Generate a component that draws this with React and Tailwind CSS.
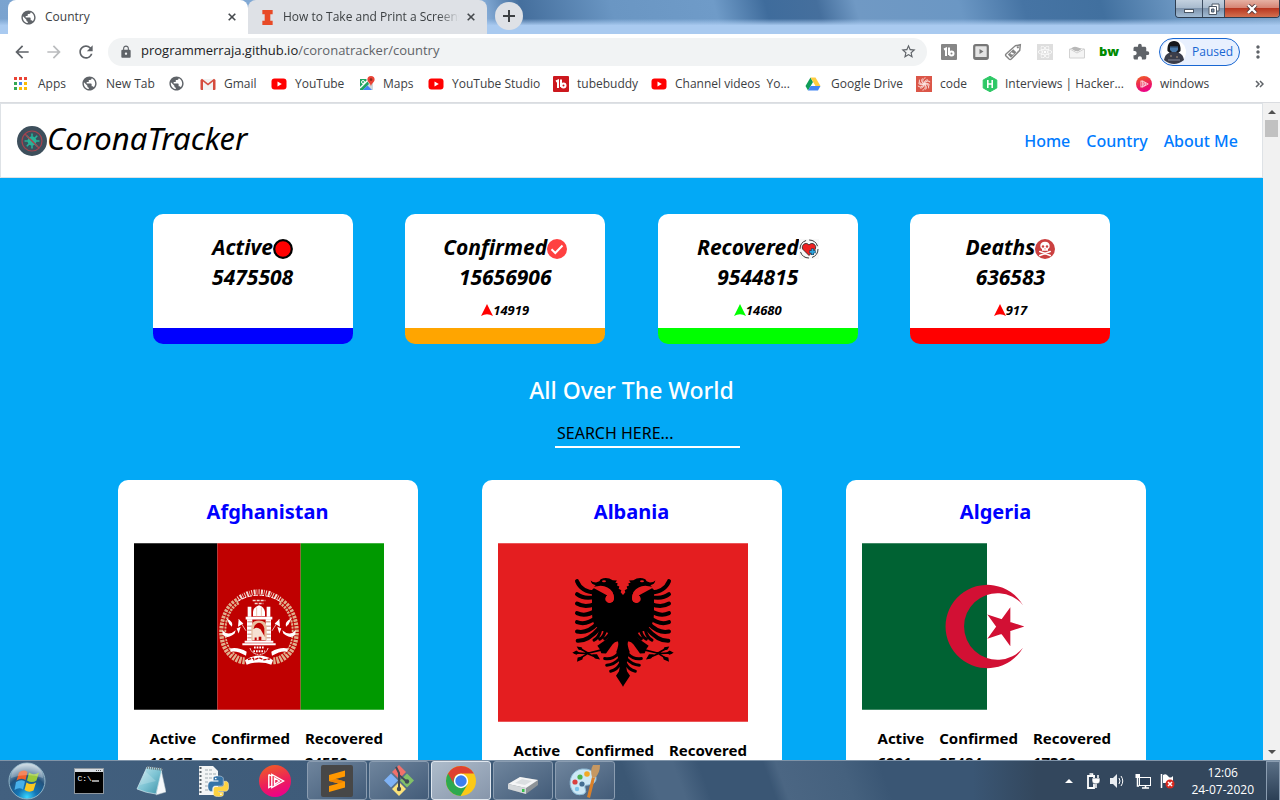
import React from "react";
import { MdArrowBack, MdArrowForward, MdRefresh, MdLock, MdStarBorder, MdExtension, MdMoreVert, MdPublic } from "react-icons/md";
import { FaReact } from "react-icons/fa";

/* ---------- browser icons ---------- */

const Globe = () => <MdPublic className="size-[17px] shrink-0 text-[#5f6368]" />;

const AppsIcon = () => (
  <svg viewBox="0 0 14 14" className="size-3.5 shrink-0">
    {["#ea4335", "#ea4335", "#ea4335", "#34a853", "#4285f4", "#fbbc05", "#34a853", "#fbbc05", "#fbbc05"].map((c, i) => (
      <rect key={i} x={(i % 3) * 5} y={Math.floor(i / 3) * 5} width="3" height="3" fill={c} />
    ))}
  </svg>
);

const GmailIcon = () => (
  <svg viewBox="0 0 16 16" className="size-4 shrink-0">
    <rect x="1" y="3" width="14" height="11" rx="1" fill="#f2f2f2" />
    <path d="M3 14V5.500L8 9.500L13 5.500V14H14.500Q15.500 14 15.500 13V4L14 2.800L8 7.400L2 2.800L.5 4V13Q.5 14 1.500 14Z" fill="#d54b3d" />
  </svg>
);

const YouTubeIcon = () => (
  <svg viewBox="0 0 16 16" className="size-4 shrink-0">
    <rect x="0.500" y="2.500" width="15" height="11" rx="3" fill="#f00" />
    <path d="M6.500 5.500V10.500L10.800 8Z" fill="#fff" />
  </svg>
);

const MapsIcon = () => (
  <svg viewBox="0 0 16 16" className="size-4 shrink-0">
    <path d="M1 3H14V14H1Z" fill="#cfd8dc" />
    <path d="M1 3H7L10 8L4 14H1Z" fill="#1fa463" />
    <path d="M4 14L8.500 9.500L13 14Z" fill="#4285f4" />
    <path d="M1 12L10 3" stroke="#fff" strokeWidth="1.400" />
    <circle cx="4" cy="6" r="1.500" fill="none" stroke="#fff" />
    <path d="M12 0A3.600 3.600 0 0 0 8.400 3.600C8.400 6.500 11.500 7 12 10.500C12.500 7 15.600 6.500 15.600 3.600A3.600 3.600 0 0 0 12 0Z" fill="#ea4335" />
    <circle cx="12" cy="3.600" r="1.300" fill="#8e2a20" />
  </svg>
);

const TubeBuddyIcon = ({ color = "#cc181e" }) => (
  <svg viewBox="0 0 16 16" className="size-4 shrink-0">
    <rect width="16" height="16" rx="1" fill={color} />
    <path d="M3 5.500L5 4.500V12M8 3.500V11" stroke="#fff" strokeWidth="2" fill="none" />
    <circle cx="10.500" cy="9.500" r="2" stroke="#fff" strokeWidth="2" fill="none" />
  </svg>
);

const DriveIcon = () => (
  <svg viewBox="0 0 16 16" className="size-4 shrink-0">
    <path d="M5.500 1.500L0.500 10L3 14.500L8 6Z" fill="#0f9d58" />
    <path d="M5.500 1.500H10.500L15.500 10H10.500Z" fill="#ffcd40" />
    <path d="M5.600 10H15.500L13 14.500H3Z" fill="#4285f4" />
  </svg>
);

const CodeIcon = () => (
  <svg viewBox="0 0 16 16" className="size-4 shrink-0">
    <rect width="16" height="16" fill="#db5648" />
    {[0, 60, 120, 180, 240, 300].map((a) => (
      <path key={a} d="M8 8C6 6 6.500 2.500 9.500 1.800M8 8C8 5 10 3.500 12 4" transform={`rotate(${a} 8 8)`} stroke="#fbe4e1" strokeWidth="0.900" fill="none" />
    ))}
  </svg>
);

const HackerIcon = () => (
  <svg viewBox="0 0 16 16" className="size-4 shrink-0">
    <path d="M8 0.300L14.800 4V12L8 15.700L1.200 12V4Z" fill="#2ec866" stroke="#2ec866" strokeLinejoin="round" />
    <path d="M5.800 4V12M10.200 4V12M5.800 8H10.200" stroke="#fff" strokeWidth="1.600" />
  </svg>
);

const Pluralsight = ({ className }) => (
  <svg viewBox="0 0 32 32" className={className}>
    <defs>
      <linearGradient id="ps" x1="0.300" y1="0" x2="0.600" y2="1">
        <stop offset="0" stopColor="#f05a28" />
        <stop offset="0.600" stopColor="#ec1c5d" />
        <stop offset="1" stopColor="#ec008c" />
      </linearGradient>
    </defs>
    <circle cx="16" cy="16" r="16" fill="url(#ps)" />
    <path d="M9.800 9.500V22.500L12.500 21M9.800 9.500L12.500 11M12.800 9.500V22.500L24.500 16ZM15.500 13V19.500L20.500 16Z" fill="none" stroke="#fff" strokeWidth="1.400" />
  </svg>
);

const bookmarks = [
  { label: "Apps", icon: <AppsIcon />, w: "w-[67px]", gap: "gap-2.5" },
  { label: "New Tab", icon: <Globe />, w: "w-[87px]" },
  { label: "", icon: <Globe />, w: "w-8" },
  { label: "Gmail", icon: <GmailIcon />, w: "w-[71px]" },
  { label: "YouTube", icon: <YouTubeIcon />, w: "w-[88px]" },
  { label: "Maps", icon: <MapsIcon />, w: "w-[69px]" },
  { label: "YouTube Studio", icon: <YouTubeIcon />, w: "w-[125px]" },
  { label: "tubebuddy", icon: <TubeBuddyIcon />, w: "w-[98px]" },
  { label: "Channel videos  Yo...", icon: <YouTubeIcon />, w: "w-[154px]" },
  { label: "Google Drive", icon: <DriveIcon />, w: "w-[111px]", gap: "gap-2.5" },
  { label: "code", icon: <CodeIcon />, w: "w-[66px]" },
  { label: "Interviews | Hacker...", icon: <HackerIcon />, w: "w-[154px]", gap: "gap-[7px]" },
  { label: "windows", icon: <Pluralsight className="size-4 shrink-0" />, w: "w-[87px]" },
];

const extensions = [
  { name: "TubeBuddy", icon: <TubeBuddyIcon color="#868686" /> },
  {
    name: "Video player",
    icon: (
      <svg viewBox="0 0 16 16" className="size-4">
        <rect x="1.200" y="1.200" width="13.600" height="13.600" rx="1.500" fill="#e4e4e4" stroke="#777" strokeWidth="2.200" />
        <path d="M2 14H14" stroke="#777" strokeWidth="2" />
        <path d="M6.500 5V10L10.500 7.500Z" fill="#777" />
      </svg>
    ),
  },
  {
    name: "Price tag",
    icon: (
      <svg viewBox="0 0 16 16" className="size-[18px]">
        <path d="M10 2.500L14.500 1.500L14 6.500L6.500 14.200Q5.500 15 4.500 14.200L1.800 11.500Q1 10.500 1.800 9.800Z" fill="#fff" stroke="#858585" strokeWidth="1.300" />
        <path d="M8.200 5.500L11 8.200L6.200 13L3.400 10.200Z" fill="#858585" />
        <path d="M6 9L8.500 9.800" stroke="#fff" strokeWidth="1.500" />
        <circle cx="12.300" cy="3.800" r="1" fill="#858585" />
      </svg>
    ),
  },
  {
    name: "React tools",
    icon: (
      <span className="flex size-4 items-center justify-center bg-[#dedede]">
        <FaReact className="size-3.5 text-white" />
      </span>
    ),
  },
  {
    name: "Mail",
    icon: (
      <svg viewBox="0 0 16 16" className="size-4">
        <path d="M0.500 5H15.500V14H0.500Z" fill="#f4f4f4" stroke="#d2d2d2" />
        <path d="M1 5L8 9L15 5" fill="#fff" stroke="#d0d0d0" />
        <path d="M2 4.500Q5 1.500 9 3.500T14 4L9 7.500Q5 7 2 4.500Z" fill="#b8b8b8" />
      </svg>
    ),
  },
  { name: "bw", icon: <span className="font-['Open_Sans'] text-[13px] font-extrabold text-[#008a00]">bw</span> },
  { name: "Extensions", icon: <MdExtension className="size-[18px] text-[#5f6368]" /> },
];

function Tab({ title, icon, active }) {
  return (
    <div className={"flex h-[34px] items-center rounded-t-lg pr-2 pl-3 " + (active ? "w-60 bg-white" : "w-[239px] bg-[#dee1e6]")}>
      {icon}
      <span className={"ml-2 min-w-0 flex-1 overflow-hidden whitespace-nowrap " + (active ? "" : "[mask-image:linear-gradient(to_right,black_88%,transparent)]")}>
        {title}
      </span>
      <button aria-label="Close tab" className="ml-1 flex size-4 items-center justify-center text-[#45494d]">
        <svg viewBox="0 0 8 8" className="size-2">
          <path d="M0.700 0.700L7.300 7.300M7.300 0.700L0.700 7.300" stroke="currentColor" strokeWidth="1.600" />
        </svg>
      </button>
    </div>
  );
}

function WindowButtons() {
  return (
    <div className="flex h-[18px] overflow-hidden rounded-b border border-t-0 border-[#2d3d50]">
      <button aria-label="Minimize" className="flex w-[27px] items-end justify-center border-r border-[#3c4c60] bg-[linear-gradient(#c3d1df_0%,#a9bbce_45%,#7d93ac_50%,#a3bcd4_100%)] pb-1">
        <span className="h-1 w-2.5 border border-[#4c5866] bg-white" />
      </button>
      <button aria-label="Restore" className="flex w-[22px] items-center justify-center border-r border-[#3c4c60] bg-[linear-gradient(#c3d1df_0%,#a9bbce_45%,#7d93ac_50%,#a3bcd4_100%)]">
        <svg viewBox="0 0 12 12" className="size-3">
          <path d="M4 1H11V8H4Z" fill="#fff" stroke="#4c5866" />
          <path d="M1 3.500H8.500V11.500H1Z" fill="#fff" stroke="#4c5866" />
          <path d="M3.500 6H6V9H3.500Z" fill="#7e93aa" stroke="#4c5866" />
        </svg>
      </button>
      <button aria-label="Close" className="flex w-[54px] items-center justify-center bg-[linear-gradient(#e6b1a3_0%,#d68574_45%,#b93720_50%,#d3704f_100%)]">
        <svg viewBox="0 0 12 10" className="h-2.5 w-3">
          <path d="M2 1L10 9M10 1L2 9" stroke="#54383a" strokeWidth="4" />
          <path d="M2 1L10 9M10 1L2 9" stroke="#fff" strokeWidth="2.400" />
        </svg>
      </button>
    </div>
  );
}

function Browser() {
  return (
    <header className="shrink-0 font-['Open_Sans','Noto_Sans',sans-serif] text-[12px] text-[#3c4043]">
      <div className="flex h-[34px] items-start bg-[linear-gradient(to_bottom,transparent_55%,#a9caf0_75%),linear-gradient(75deg,#7aa3cf_0%,#86add8_38%,#456f9d_41%,#6a96c3_48%,#6f9bc8_56%,#3f6c9c_60%,#456f9d_64%,#7099c4_67%,#6b97c4_75%,#4674a4_80%,#41709f_86%,#6c97c2_92%,#7fa5cc_100%)] pl-2">
        <Tab active title="Country" icon={<Globe />} />
        <Tab
          title="How to Take and Print a Screenshot"
          icon={
            <svg viewBox="0 0 16 16" className="size-[15px] shrink-0">
              <path d="M2.500 0H13.500V4.500H11V11.500H13.500V16H2.500V11.500H5V4.500H2.500Z" fill="#e84a27" />
            </svg>
          }
        />
        <button aria-label="New tab" className="mt-0.5 ml-2 flex size-7 items-center justify-center rounded-full bg-[#dee1e6] text-[#3c4043]">
          <svg viewBox="0 0 12 12" className="size-3"><path d="M6 0V12M0 6H12" stroke="currentColor" strokeWidth="2" /></svg>
        </button>
        <div className="flex-1" />
        <WindowButtons />
      </div>

      <div className="flex h-[35px] items-center bg-white px-1.5">
        <button aria-label="Back" className="flex w-8 justify-center text-[#5f6368]"><MdArrowBack className="size-5" /></button>
        <button aria-label="Forward" className="flex w-8 justify-center text-[#babcbe]"><MdArrowForward className="size-5" /></button>
        <button aria-label="Reload" className="flex w-8 justify-center text-[#5f6368]"><MdRefresh className="size-5" /></button>
        <div className="ml-1.5 flex h-7 flex-1 items-center rounded-full bg-[#f1f3f4] pr-2.5 pl-[11px]">
          <MdLock className="size-3.5 text-[#5f6368]" />
          <a href="#country" className="ml-2 flex-1 pb-px text-[13px] text-[#5f6368]">
            <span className="text-[#202124]">programmerraja.github.io</span>/coronatracker/country
          </a>
          <button aria-label="Bookmark this page" className="text-[#5f6368]"><MdStarBorder className="size-[17px]" /></button>
        </div>
        <div className="ml-1.5 flex">
          {extensions.map((e) => (
            <button key={e.name} aria-label={e.name} className="flex h-7 w-8 items-center justify-center">{e.icon}</button>
          ))}
        </div>
        <button className="ml-0.5 flex h-7 w-[81px] items-center gap-1.5 rounded-full border border-[#1967d2] bg-[#e8f0fe] pl-0.5 text-[#1967d2]">
          <svg viewBox="0 0 24 24" className="size-6">
            <circle cx="12" cy="12" r="12" fill="#fff" />
            <path d="M5.500 11C5 5 7 1 12 1S19 5 18.500 11L15 14H9Z" fill="#15171d" />
            <path d="M8 6H16V10L14 12H10L8 10Z" fill="#4777a8" />
            <path d="M8 6H16V7.500H8Z" fill="#27415f" />
            <path d="M2 20C3 13 8 12 12 12S21 13 22 20Q17 24 12 24T2 20Z" fill="#3a3d4a" />
            <circle cx="9" cy="16" r="1" fill="#8a7a6c" />
            <circle cx="15" cy="17" r="1" fill="#8a7a6c" />
            <path d="M6 20H18" stroke="#6c7080" strokeWidth="1.500" />
          </svg>
          Paused
        </button>
        <button aria-label="Menu" className="ml-0.5 flex w-8 justify-center text-[#5f6368]"><MdMoreVert className="size-5" /></button>
      </div>

      <nav aria-label="Bookmarks" className="flex h-[34px] items-center border-b border-[#dadce0] bg-white pr-4 pb-1 pl-3.5">
        {bookmarks.map((b, i) => (
          <a key={i} href="#bookmark" aria-label={b.label || "Bookmark"} className={"flex shrink-0 items-center whitespace-pre " + b.w + " " + (b.gap || "gap-2")}>
            {b.icon}
            {b.label && <span>{b.label}</span>}
          </a>
        ))}
        <button aria-label="More bookmarks" className="ml-auto text-[#5f6368]">
          <svg viewBox="0 0 9 8" className="h-2 w-[9px]">
            <path d="M1 1L4 4L1 7M5 1L8 4L5 7" fill="none" stroke="currentColor" strokeWidth="1.500" />
          </svg>
        </button>
      </nav>
    </header>
  );
}

/* ---------- page ---------- */

const VirusLogo = () => (
  <svg viewBox="0 0 30 30" className="size-[30px]">
    <circle cx="15" cy="15" r="15" fill="#3d4f5c" />
    <circle cx="15" cy="15" r="4.500" fill="#27b399" />
    {[0, 45, 90, 135, 180, 225, 270, 315].map((a) => (
      <path key={a} d="M15 11V8.500M14.200 8.300H15.800" transform={`rotate(${a} 15 15)`} stroke="#27b399" strokeWidth="1.500" />
    ))}
    <circle cx="15" cy="15" r="10" fill="none" stroke="#a6434f" strokeWidth="1.200" />
    <path d="M8 8L22 22" stroke="#a6434f" strokeWidth="1.400" />
  </svg>
);

const ActiveIcon = () => (
  <svg viewBox="0 0 20 20" className="size-5">
    <circle cx="10" cy="10" r="8.800" fill="#f00" stroke="#000" strokeWidth="2.200" />
  </svg>
);

const CheckIcon = () => (
  <svg viewBox="0 0 20 20" className="size-5">
    <circle cx="10" cy="10" r="10" fill="#ff4141" />
    <path d="M4.500 10.300L8.300 14L15.500 6.500" fill="none" stroke="#fff" strokeWidth="2" />
  </svg>
);

const HeartIcon = () => (
  <svg viewBox="0 0 20 20" className="size-5">
    <rect width="20" height="20" fill="#f8f8f8" />
    <circle cx="10" cy="10" r="9" fill="none" stroke="#222" strokeWidth="0.900" strokeDasharray="11 3.100" />
    <path d="M10 16.500L4 10.500C1.500 6.500 6.500 2 10 6C13.500 2 18.500 6.500 16 10.500Z" fill="#ee2222" stroke="#222" strokeWidth="0.800" />
    <path d="M13.500 9.500V16M10.300 12.800H16.700" stroke="#163c57" strokeWidth="3" />
    <path d="M13.500 10V15.500M10.800 12.800H16.200" stroke="#2da3dc" strokeWidth="1.800" />
  </svg>
);

const SkullIcon = () => (
  <svg viewBox="0 0 20 20" className="size-5">
    <circle cx="10" cy="10" r="10" fill="#cb4040" />
    <path d="M10 2.800C6.800 2.800 5.300 4.800 5.300 7C5.300 8.600 6 9.500 7 10V11.800H13V10C14 9.500 14.700 8.600 14.700 7C14.700 4.800 13.200 2.800 10 2.800Z" fill="#fff" />
    <circle cx="8" cy="7.500" r="1.200" fill="#cb4040" />
    <circle cx="12" cy="7.500" r="1.200" fill="#cb4040" />
    <path d="M10 9L9.300 10.200H10.700Z" fill="#cb4040" />
    <path d="M4.800 12.500L15.200 16.500M15.200 12.500L4.800 16.500" stroke="#fff" strokeWidth="1.600" strokeLinecap="round" />
  </svg>
);

const stats = [
  { title: "Active", total: "5475508", bar: "border-[#0000ff]", icon: <ActiveIcon /> },
  { title: "Confirmed", total: "15656906", delta: "14919", arrow: "#ff0000", bar: "border-[#ffa500]", icon: <CheckIcon /> },
  { title: "Recovered", total: "9544815", delta: "14680", arrow: "#00ff00", bar: "border-[#00ff00]", icon: <HeartIcon /> },
  { title: "Deaths", total: "636583", delta: "917", arrow: "#ff0000", bar: "border-[#ff0000]", icon: <SkullIcon /> },
];

function StatCard({ title, total, delta, arrow, bar, icon }) {
  return (
    <section className={"h-[130px] w-[200px] rounded-[10px] border-b-16 bg-white pt-[18px] text-center font-bold text-black italic " + bar}>
      <h3 className="flex items-center justify-center text-[21px] leading-[30px]">
        {title}
        <span className="pt-1">{icon}</span>
      </h3>
      <p className="text-[21px] leading-[30px]">{total}</p>
      {delta && (
        <p className="mt-2 flex items-center justify-center text-[13px] leading-5">
          <svg viewBox="0 0 12 12" className="size-3">
            <path d="M6 0L12 12Q6 8.500 0 12Z" fill={arrow} />
          </svg>
          {delta}
        </p>
      )}
    </section>
  );
}

const AfghanistanFlag = () => (
  <svg viewBox="72 219 750 500" className="h-[167px] w-[250px]" role="img" aria-label="Flag of Afghanistan">
    <path d="M72 219H322V719H72Z" fill="#000" />
    <path d="M322 219H572V719H322Z" fill="#bf0000" />
    <path d="M572 219H822V719H572Z" fill="#090" />
    <path d="M384 386Q447 343 512 388" fill="none" stroke="#f3dcd2" strokeWidth="15" strokeDasharray="3 4 6 3 2 4" />
    <path d="M380 395Q447 354 516 397" fill="none" stroke="#fff" strokeWidth="3" strokeDasharray="14 4" />
    <path d="M428 391H466M434 400H460" stroke="#f3d9cf" strokeWidth="4" strokeDasharray="9 3" />
    {["", "translate(894 0) scale(-1 1)"].map((t) => (
      <g key={t} transform={t}>
        <path d="M383 393C332 420 322 520 366 555C378 566 392 572 404 572" fill="none" stroke="#e0b08d" strokeWidth="21" strokeDasharray="7 3" />
        <path d="M380 396C336 422 327 518 368 552" fill="none" stroke="#bf0000" strokeWidth="3" />
        <path d="M337 480Q355 500 377 480L374 490Q352 508 338 494ZM350 445Q372 455 366 470L358 462ZM360 535Q385 530 410 545L408 557Q380 540 362 545Z" fill="#fff" />
        <path d="M386 447L408 482" fill="none" stroke="#fff" strokeWidth="2" />
        <path d="M386 447L400 460L384 470ZM380 475L392 470L386 490Z" fill="#fff" />
        <path d="M413 410H424V440H413ZM411 447H427V512H411Z" fill="#fff" />
        <path d="M412 455H426M412 468H426M412 480H426M412 492H426M412 503H426" stroke="#c0836e" strokeWidth="3" />
        <path d="M407 440H447V448H407ZM404 512H447V518H404ZM397 519H447V525H397Z" fill="#fff" />
        <path d="M405 570Q425 556 447 556V577Q425 577 410 584Z" fill="#fff" />
        <path d="M420 534Q426 552 447 553" fill="none" stroke="#fff" strokeWidth="3" strokeDasharray="5 2" />
      </g>
    ))}
    <path d="M429 438V425Q431 410 447 405Q463 410 465 425V438Z" fill="#fff" />
    <path d="M440 412V438M454 412V438" stroke="#efc7b0" strokeWidth="3" />
    <path d="M424 510V470Q426 451 447 451Q468 451 470 470V510H463V475Q460 460 447 458Q434 460 431 475V510Z" fill="#e8bfa0" />
    <path d="M428 478Q440 468 452 478L466 503V510H428Z" fill="#f6e1d2" />
    <path d="M434 510V502H440V510M446 510V500H454V510" fill="#bf0000" />
    <path d="M432 532H462M430 543H464" stroke="#fff" strokeWidth="6" strokeDasharray="5 3" />
    <path d="M414 568L430 564L432 569L447 563L462 569L480 566" fill="none" stroke="#bf0000" strokeWidth="4" strokeDasharray="10 3" />
  </svg>
);

const AlbaniaFlag = () => (
  <svg viewBox="54 219 750 536" className="h-[179px] w-[250px]" role="img" aria-label="Flag of Albania">
    <path d="M54 219H804V755H54Z" fill="#e41e20" />
    {["", "translate(858 0) scale(-1 1)"].map((t) => (
      <g key={t} transform={t} fill="#000">
        <path d="M429.500 375L422 366L424 360L416 356L418 349L411 346L413 339L406 338L411 331L398 330Q385 321 370 324Q360 326 358 333L348 337Q337 337 332 331Q334 343 347 345L342 350L362 347Q385 348 397 365Q406 385 398 395Q385 403 377 391Q375 380 382 376L342 354Q333 358 336 370V425Q336 450 344 466L363 481L390 490L384 504L352 527Q358 533 364 549L378 550L398 522Q406 512 414 514Q417 525 409 545L420 585L417 603L408 617L429.500 650Z" />
        <path fill="#e41e20" d="M348 350Q385 352 398 368Q406 385 398 395Q385 403 377 391Q375 380 382 376Q368 362 348 350Z" />
        <g fill="none" stroke="#000" strokeLinecap="round">
          <path strokeWidth="12" d="M291 333Q304 365 346 367M291 372Q311 388 346 380M291 400Q314 414 346 401M291 429Q318 441 346 421M291 456Q320 466 348 442M291 484Q322 491 352 460M293 512Q325 513 359 473" />
          <path strokeWidth="9" d="M342 510Q357 503 363 476M359 507Q371 501 376 482M374 506Q387 499 391 484" />
          <path strokeWidth="9" d="M374 565Q397 569 413 552M380 585Q402 584 419 565M392 603Q412 599 422 578" />
          <path strokeWidth="5" d="M362 540L320 550L284 548M325 549L296 533M325 549L296 567M322 550L355 564" />
        </g>
        <path d="M277 548L289 541L299 548L289 554ZM290 529L305 531L309 541L296 539ZM291 575L293 562L310 558L307 568ZM336 552L351 552L360 568L345 565Z" />
        <ellipse cx="372" cy="333" rx="6" ry="3" fill="#e41e20" />
      </g>
    ))}
  </svg>
);

const AlgeriaFlag = () => (
  <svg viewBox="66 219 750 500" className="h-[167px] w-[250px]" role="img" aria-label="Flag of Algeria">
    <path d="M66 219H816V719H66Z" fill="#fff" />
    <path d="M66 219H441V719H66Z" fill="#006233" />
    <path d="M549 405A125 125 0 1 0 549 533A100 100 0 1 1 549 405Z" fill="#d21034" />
    <path d="M553 469L442 433L511 528V411L442 506Z" fill="#d21034" />
  </svg>
);

const countries = [
  { name: "Afghanistan", flag: <AfghanistanFlag />, values: ["10167", "35928", "24550"] },
  { name: "Albania", flag: <AlbaniaFlag />, values: ["1875", "4466", "2463"] },
  { name: "Algeria", flag: <AlgeriaFlag />, values: ["6991", "25484", "17369"] },
];

function CountryCard({ name, flag, values }) {
  return (
    <article className="w-[300px] rounded-[10px] bg-white px-4 pt-[17px] pb-6">
      <h3 className="text-center text-[20px] leading-[30px] font-bold text-[#0000ff]">{name}</h3>
      <div className="mt-4">{flag}</div>
      <table className="mt-4 ml-4 text-left text-[15px] leading-6 font-bold text-black">
        <thead>
          <tr>
            {["Active", "Confirmed", "Recovered"].map((h) => (
              <th key={h} className="pr-[15px]">{h}</th>
            ))}
          </tr>
        </thead>
        <tbody>
          <tr>
            {values.map((v) => (
              <td key={v} className="pr-[15px]">{v}</td>
            ))}
          </tr>
        </tbody>
      </table>
    </article>
  );
}

function Page() {
  return (
    <main className="min-w-0 flex-1 overflow-hidden bg-[#03a9f6] font-['Noto_Sans','Open_Sans',sans-serif]">
      <div className="flex h-[75px] items-center justify-between border border-[#dee2e6] bg-white px-4">
        <a href="#home" className="flex items-center text-[31px] text-black italic">
          <VirusLogo />
          <span className="pb-1">CoronaTracker</span>
        </a>
        <nav aria-label="Main" className="flex gap-4 pr-2 text-[16px] font-medium text-[#007bff]">
          <a href="#home">Home</a>
          <a href="#country">Country</a>
          <a href="#about">About Me</a>
        </nav>
      </div>

      <div className="flex justify-evenly px-[100px] pt-9">
        {stats.map((s) => <StatCard key={s.title} {...s} />)}
      </div>

      <h2 className="mt-7 text-center text-[23px] leading-9 font-medium text-white">All Over The World</h2>
      <div className="mt-3 flex justify-center pl-8">
        <input aria-label="Search country" placeholder="SEARCH HERE..." className="h-[28px] w-[185px] border-b-2 border-white bg-transparent px-0.5 text-[16px] text-black outline-none placeholder:text-black" />
      </div>

      <div className="mt-8 flex items-start justify-center gap-16">
        {countries.map((c) => <CountryCard key={c.name} {...c} />)}
      </div>
    </main>
  );
}

function ScrollBar() {
  return (
    <div className="flex w-[17px] shrink-0 flex-col items-center bg-[#f1f1f1]">
      <button aria-label="Scroll up" className="flex h-[17px] items-center">
        <svg viewBox="0 0 8 4" className="h-1 w-2"><path d="M0 4L4 0L8 4Z" fill="#505050" /></svg>
      </button>
      <div className="h-[17px] w-[13px] bg-[#c1c1c1]" />
      <div className="flex-1" />
      <button aria-label="Scroll down" className="flex h-[17px] items-center">
        <svg viewBox="0 0 8 4" className="h-1 w-2"><path d="M0 0L4 4L8 0Z" fill="#505050" /></svg>
      </button>
    </div>
  );
}

/* ---------- taskbar ---------- */

const StartOrb = () => (
  <svg viewBox="0 0 38 38" className="size-[38px]">
    <defs>
      <radialGradient id="orb" cx="0.500" cy="0.950" r="0.900">
        <stop offset="0" stopColor="#39d7ff" />
        <stop offset="0.300" stopColor="#1374b4" />
        <stop offset="0.650" stopColor="#23527c" />
        <stop offset="1" stopColor="#b8cbd8" />
      </radialGradient>
    </defs>
    <circle cx="19" cy="19" r="18" fill="url(#orb)" stroke="#8fb3c6" />
    <path d="M11 10.500Q15.500 7 19.500 10L17.500 18Q13 15.500 8.500 18.500Z" fill="#f0602a" />
    <path d="M21 10.500Q26 14 31 10.500L28.500 18.500Q24 21.500 19 18.500Z" fill="#9bc93a" />
    <path d="M8 20Q13 17 17 19.500L15 27.500Q11 25 6.500 28Z" fill="#48b0ea" />
    <path d="M18.500 20.500Q23 23.500 28 20.500L25.500 28.500Q21 31 16.500 28Z" fill="#fcc822" />
    <path d="M3 16A16 15 0 0 1 35 16Q19 10 3 16Z" fill="#fff" opacity="0.250" />
  </svg>
);

const CmdIcon = () => (
  <svg viewBox="0 0 30 26" className="h-[26px] w-[30px]">
    <rect width="30" height="26" fill="#8e979f" />
    <rect x="1" y="1" width="28" height="3" fill="#d8dde2" />
    <path d="M22 2.500H28" stroke="#555" strokeDasharray="1 1" />
    <rect x="1" y="4" width="28" height="21" fill="#000" />
    <text x="3.500" y="13" fontSize="8" fill="#fff" fontFamily="Liberation Mono, monospace">C:\</text>
    <path d="M18 13H25" stroke="#fff" strokeWidth="1.200" />
  </svg>
);

const NotepadIcon = () => (
  <svg viewBox="0 0 30 32" className="h-8 w-[30px]">
    <defs>
      <linearGradient id="note" x1="0" y1="0" x2="1" y2="1">
        <stop offset="0" stopColor="#c6e7ee" />
        <stop offset="0.500" stopColor="#7ec4d4" />
        <stop offset="1" stopColor="#3b90a6" />
      </linearGradient>
    </defs>
    <path d="M25 4L30 27L20 30Z" fill="#f5f8fa" stroke="#a9b9c0" strokeWidth="0.500" />
    <path d="M11 2L26 4L20 29Q10 28 1 24Z" fill="url(#note)" stroke="#d3eaf0" strokeWidth="0.700" />
    <path d="M11 2.500L27 4.500" stroke="#6d7a80" strokeWidth="3" strokeDasharray="1 1" />
    <path d="M9 6L20 16L4 20Z" fill="#fff" opacity="0.200" />
  </svg>
);

const PYTHON_TOP = "M14.25.18l.9.2.73.26.59.3.45.32.34.34.25.34.16.33.1.3.04.26.02.2-.01.13V8.5l-.05.63-.13.55-.21.46-.26.38-.3.31-.33.25-.35.19-.35.14-.33.1-.3.07-.26.04-.21.02H8.77l-.69.05-.59.14-.5.22-.41.27-.33.32-.27.35-.2.36-.15.37-.1.35-.07.32-.04.27-.02.21v3.06H3.17l-.21-.03-.28-.07-.32-.12-.35-.18-.36-.26-.36-.36-.35-.46-.32-.59-.28-.73-.21-.88-.14-1.05-.05-1.23.06-1.22.16-1.04.24-.87.32-.71.36-.57.4-.44.42-.33.42-.24.4-.16.36-.1.32-.05.24-.01h.16l.06.01h8.16v-.83H6.18l-.01-2.75-.02-.37.05-.34.11-.31.17-.28.25-.26.31-.23.38-.2.44-.18.51-.15.58-.12.64-.1.71-.06.77-.04.84-.02 1.27.05z";
const PYTHON_BOTTOM = "M21.1 6.11l.28.06.32.12.35.18.36.27.36.35.35.47.32.59.28.73.21.88.14 1.04.05 1.23-.06 1.23-.16 1.04-.24.86-.32.71-.36.57-.4.45-.42.33-.42.24-.4.16-.36.09-.32.05-.24.02-.16-.01h-8.22v.82h5.84l.01 2.76.02.36-.05.34-.11.31-.17.29-.25.25-.31.24-.38.2-.44.17-.51.15-.58.13-.64.09-.71.07-.77.04-.84.01-1.27-.04-1.07-.14-.9-.2-.73-.25-.59-.3-.45-.33-.34-.34-.25-.34-.16-.33-.1-.3-.04-.25-.02-.2.01-.13v-5.34l.05-.64.13-.54.21-.46.26-.38.3-.32.33-.24.35-.2.35-.14.33-.1.3-.06.26-.04.21-.02.13-.01h5.84l.69-.05.59-.14.5-.21.41-.28.33-.32.27-.35.2-.36.15-.36.1-.35.07-.32.04-.28.02-.21V6.07h2.09l.14.01z";

const PythonIcon = () => (
  <svg viewBox="0 0 32 32" className="size-8">
    <path d="M2 1H16L21 6V30H2Z" fill="#f3f5f6" />
    <path d="M3.500 2V30" stroke="#59636a" strokeWidth="2" strokeDasharray="2 2" />
    <path d="M8 5H16M8 9H19M8 13H19M8 17H12M8 21H12M8 25H12" stroke="#bcc3c7" strokeWidth="1.500" strokeDasharray="3 1" />
    <g transform="translate(11 11) scale(0.860)">
      <path d={PYTHON_TOP} fill="#3674a8" stroke="#fff" strokeWidth="0.500" />
      <path d={PYTHON_BOTTOM} fill="#fdd341" stroke="#fff" strokeWidth="0.500" />
      <circle cx="9" cy="2.900" r="1" fill="#fff" />
      <circle cx="15" cy="21.100" r="1" fill="#fff" />
    </g>
  </svg>
);

const SublimeIcon = () => (
  <svg viewBox="0 0 32 32" className="size-8">
    <rect width="32" height="32" rx="2" fill="#474747" />
    <path d="M8 10L24 5.500V11.500L14.500 14L24 16.500V22.500L8 27V21L17.500 18.500L8 16Z" fill="#ff9800" />
    <path d="M8 16L14.500 14L24 16.500L17.500 18.500Z" fill="#f08400" />
  </svg>
);

const GitIcon = () => (
  <svg viewBox="0 0 34 34" className="size-[34px]">
    <path d="M17 1L24 8L17 15L10 8Z" fill="#f0716b" />
    <path d="M9 9.500L16 16.500L9 23.500L2 16.500Z" fill="#7fb2f5" />
    <path d="M25 9.500L32 16.500L25 23.500L18 16.500Z" fill="#82c168" />
    <path d="M17 18L24 25L17 32L10 25Z" fill="#fbe27a" />
    <path d="M14 3L17 9V25M17 11L24 17" stroke="#3e4a57" strokeWidth="2" fill="none" />
    <circle cx="17" cy="25" r="2.200" fill="#3e4a57" />
    <circle cx="25" cy="17.500" r="2.200" fill="#3e4a57" />
  </svg>
);

const ChromeIcon = () => (
  <svg viewBox="0 0 32 32" className="size-8">
    <circle cx="16" cy="16" r="15" fill="#fbc916" />
    <path d="M3 8.500A15 15 0 0 0 15.500 31L22.500 19.500L16 16Z" fill="#2da94f" />
    <path d="M3 8.500A15 15 0 0 1 29 8.500H16A7.500 7.500 0 0 0 9.500 19.750Z" fill="#df4130" />
    <circle cx="16" cy="16" r="7.200" fill="#fff" />
    <circle cx="16" cy="16" r="5.700" fill="#3c7ff0" />
  </svg>
);

const DiskIcon = () => (
  <svg viewBox="0 0 32 20" className="mt-2 h-5 w-8">
    <path d="M1 9L13 2L31 5V10L19 19L1 14Z" fill="#8d9397" />
    <path d="M1 9L13 2L31 5L19 13Z" fill="#f4f5f6" />
    <path d="M1 9L19 13V19L1 14Z" fill="#d3d7da" />
    <path d="M8 8L15 4L25 6L18 10Z" fill="#dbdfe1" />
    <rect x="15" y="14" width="2.500" height="3" fill="#38c24a" />
  </svg>
);

const PaintIcon = () => (
  <svg viewBox="0 0 34 34" className="size-[34px]">
    <path d="M14 5C5 6 0 15 3 24Q6 33 16 30Q19 28 17 24Q16 21 20 21Q29 20 28 13Q25 4 14 5Z" fill="#cde8f6" stroke="#8fbdd8" />
    <circle cx="12" cy="13" r="2.600" fill="#4db24f" />
    <circle cx="19" cy="10" r="2.800" fill="#f2a927" />
    <circle cx="7" cy="18" r="2.600" fill="#d94040" />
    <circle cx="14" cy="20" r="2.600" fill="#456f93" />
    <circle cx="9" cy="25" r="2.200" fill="#7cc3ea" />
    <path d="M19 33L24 13L27 14L22 34Z" fill="#d9802a" />
    <path d="M24 13Q22 6 25 1H32Q32 9 27 14Z" fill="#c69862" />
  </svg>
);

const tasks = [
  { name: "Command Prompt", icon: <CmdIcon /> },
  { name: "Notepad", icon: <NotepadIcon /> },
  { name: "Python", icon: <PythonIcon /> },
  { name: "Pluralsight", icon: <Pluralsight className="size-8" /> },
  { name: "Sublime Text", icon: <SublimeIcon />, open: true },
  { name: "Git", icon: <GitIcon />, open: true },
  { name: "Chrome", icon: <ChromeIcon />, open: true, active: true },
  { name: "Disk", icon: <DiskIcon />, open: true },
  { name: "Paint", icon: <PaintIcon />, open: true },
];

function TaskButton({ name, icon, open, active }) {
  const look = active
    ? "border-[#dfe6ee] bg-linear-to-br from-[#aebccb] to-[#8796ab]"
    : open
      ? "border-[#8b9db1] bg-linear-to-br from-[#6f859d] to-[#435c79]"
      : "border-transparent";
  return (
    <button aria-label={name} className={"flex h-[39px] w-[60px] items-center justify-center rounded-[3px] border " + look}>
      {icon}
    </button>
  );
}

function Tray() {
  return (
    <div className="flex items-center gap-2 text-white">
      <svg viewBox="0 0 8 4" className="mr-1 h-1 w-2"><path d="M0 4L4 0L8 4Z" fill="#fff" /></svg>
      <svg viewBox="0 0 16 16" className="size-4">
        <path d="M3 3H9V15H3Z" fill="none" stroke="#fff" strokeWidth="1.800" />
        <path d="M4.500 1H7.500V3" stroke="#fff" strokeWidth="1.500" fill="none" />
        <path d="M7 5H15V8Q15 11 11 11Q7 11 7 8Z" fill="#fff" stroke="#27384c" strokeWidth="0.600" />
        <path d="M9 2V5M13 2V5M11 11V15" stroke="#fff" strokeWidth="1.500" />
      </svg>
      <svg viewBox="0 0 16 16" className="size-4">
        <path d="M1 5H4L8 1V15L4 11H1Z" fill="#e9edf1" />
        <path d="M10 5Q12 8 10 11M12 3Q15.500 8 12 13" fill="none" stroke="#fff" />
      </svg>
      <svg viewBox="0 0 16 16" className="ml-0.5 size-4">
        <rect x="4.500" y="4.500" width="11" height="8" fill="#2b4058" stroke="#fff" />
        <path d="M7 15H14M10.500 12V15M2.500 5V13H4" stroke="#fff" strokeWidth="1.500" fill="none" />
        <path d="M0.500 1H5V5H0.500Z" fill="#fff" />
      </svg>
      <svg viewBox="0 0 16 16" className="size-4">
        <path d="M2.500 1V15" stroke="#fff" strokeWidth="1.500" />
        <path d="M4 2Q7 0 9 3T14 3V10H4Z" fill="#fff" />
        <circle cx="11" cy="11" r="4.500" fill="#d8281e" />
        <path d="M9 9L13 13M13 9L9 13" stroke="#fff" strokeWidth="1.500" />
      </svg>
    </div>
  );
}

function Taskbar() {
  return (
    <footer className="flex h-10 shrink-0 items-center border-t border-[#7f93a8] bg-[linear-gradient(to_right,transparent_76%,#33475d_81%),linear-gradient(70deg,#42607f_0%,#3b5774_49%,#4c6784_51%,#4c6784_53%,#3a5674_55%,#3a5674_60%,#4b6683_61%,#45617e_66%,#3a5674_69%)] font-['Open_Sans','Noto_Sans',sans-serif]">
      <button aria-label="Start" className="flex w-[59px] justify-start pl-2"><StartOrb /></button>
      <div className="flex gap-0.5">
        {tasks.map((t) => <TaskButton key={t.name} {...t} />)}
      </div>
      <div className="flex-1" />
      <Tray />
      <div className="ml-4 text-center text-[12px] leading-[17px] text-white">
        <div>12:06</div>
        <div>24-07-2020</div>
      </div>
      <button aria-label="Show desktop" className="ml-3 h-10 w-3.5 border border-[#8b9db1] bg-linear-to-b from-[#5a6f86] to-[#2c3f55]" />
    </footer>
  );
}

export default function App() {
  return (
    <div className="flex h-screen flex-col overflow-hidden bg-white">
      <Browser />
      <div className="flex min-h-0 flex-1">
        <Page />
        <ScrollBar />
      </div>
      <Taskbar />
    </div>
  );
}
